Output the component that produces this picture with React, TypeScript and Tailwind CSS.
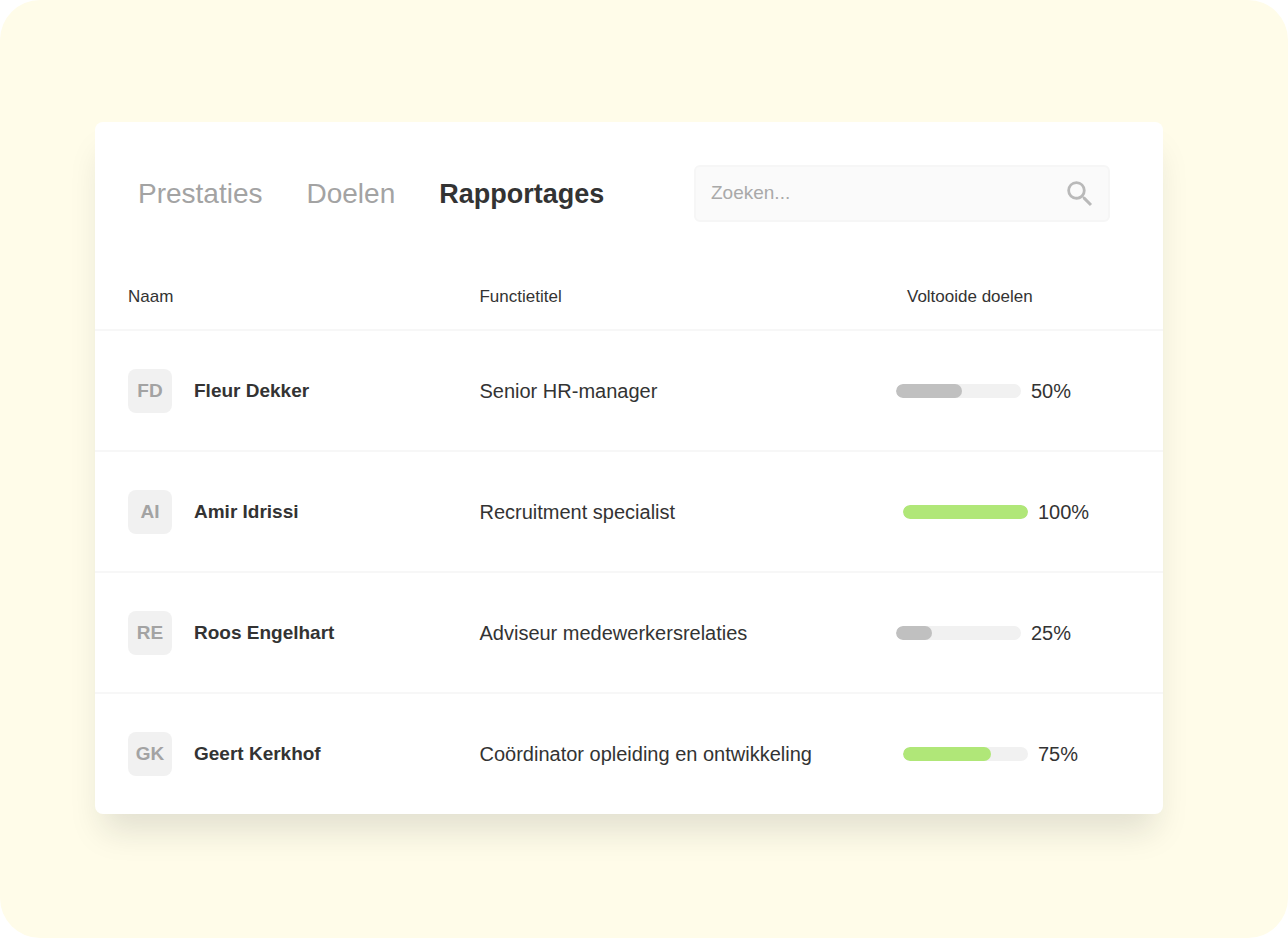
import React from "react";
import clsx from "clsx";
import { MdSearch } from "react-icons/md";

const tabs = ["Prestaties", "Doelen", "Rapportages"];

const employees = [
  {
    initials: "FD",
    name: "Fleur Dekker",
    jobTitle: "Senior HR-manager",
    completed: 50,
    fill: 66,
    onTrack: false,
  },
  {
    initials: "AI",
    name: "Amir Idrissi",
    jobTitle: "Recruitment specialist",
    completed: 100,
    fill: 125,
    onTrack: true,
  },
  {
    initials: "RE",
    name: "Roos Engelhart",
    jobTitle: "Adviseur medewerkersrelaties",
    completed: 25,
    fill: 36,
    onTrack: false,
  },
  {
    initials: "GK",
    name: "Geert Kerkhof",
    jobTitle: "Coördinator opleiding en ontwikkeling",
    completed: 75,
    fill: 88,
    onTrack: true,
  },
];

const Toolbar = () => (
  <header className="flex items-center justify-between gap-8 py-[43px] pl-[43px] pr-[53px]">
    <nav className="flex items-baseline gap-11">
      {tabs.map((tab) => (
        <button
          key={tab}
          type="button"
          className={clsx(
            tab === "Rapportages"
              ? "text-[27px] font-bold text-[#333333]"
              : "text-[28px] text-[#a3a3a3]"
          )}
        >
          {tab}
        </button>
      ))}
    </nav>
    <label className="flex h-[57px] w-[416px] items-center rounded-md border-2 border-[#f6f6f6] bg-[#fafafa] pl-[15px] pr-[11px]">
      <input
        type="search"
        aria-label="Zoeken"
        placeholder="Zoeken..."
        className="min-w-0 flex-1 bg-transparent text-[19px] text-[#333333] outline-none placeholder:text-[#a9a9a9]"
      />
      <MdSearch className="size-[34px] text-[#b9b9b9]" />
    </label>
  </header>
);

const GoalProgress = ({ employee }: { employee: (typeof employees)[0] }) => (
  <div
    className={clsx(
      "flex items-center gap-[10px]",
      employee.onTrack && "pl-[7px]"
    )}
  >
    <div
      role="progressbar"
      aria-label={`Voltooide doelen ${employee.name}`}
      aria-valuenow={employee.completed}
      className="h-[14px] w-[125px] overflow-hidden rounded-full bg-[#f1f1f1]"
    >
      <div
        className={clsx(
          "h-full rounded-full",
          employee.onTrack ? "bg-[#b0e778]" : "bg-[#c0c0c0]"
        )}
        style={{ width: employee.fill }}
      />
    </div>
    <span>{employee.completed}%</span>
  </div>
);

export default function App() {
  return (
    <div className="min-h-screen rounded-[40px] bg-[#fffce9] pt-[122px] pb-[122px] pl-[95px] pr-[125px] font-['Liberation_Sans',Arial,sans-serif] text-[#333333]">
      <main className="rounded-lg bg-white shadow-[0_24px_32px_-8px_rgba(20,30,40,0.13)]">
        <Toolbar />
        <table className="w-full table-fixed text-left">
          <thead>
            <tr className="h-[65px] border-b-2 border-[#f7f7f7] text-[17px]">
              <th className="w-[36%] pl-[33px] font-normal">Naam</th>
              <th className="w-[39%] font-normal">Functietitel</th>
              <th className="pl-[11px] font-normal">Voltooide doelen</th>
            </tr>
          </thead>
          <tbody>
            {employees.map((employee) => (
              <tr
                key={employee.initials}
                className="h-[121px] border-b-2 border-[#f7f7f7] text-[20px] leading-7 last:border-b-0"
              >
                <td className="pl-[33px]">
                  <div className="flex items-center gap-[22px] text-[19px] font-bold">
                    <span className="flex size-11 items-center justify-center rounded-lg bg-[#f1f1f1] text-[#a3a3a3]">
                      {employee.initials}
                    </span>
                    <span>{employee.name}</span>
                  </div>
                </td>
                <td>{employee.jobTitle}</td>
                <td>
                  <GoalProgress employee={employee} />
                </td>
              </tr>
            ))}
          </tbody>
        </table>
      </main>
    </div>
  );
}
